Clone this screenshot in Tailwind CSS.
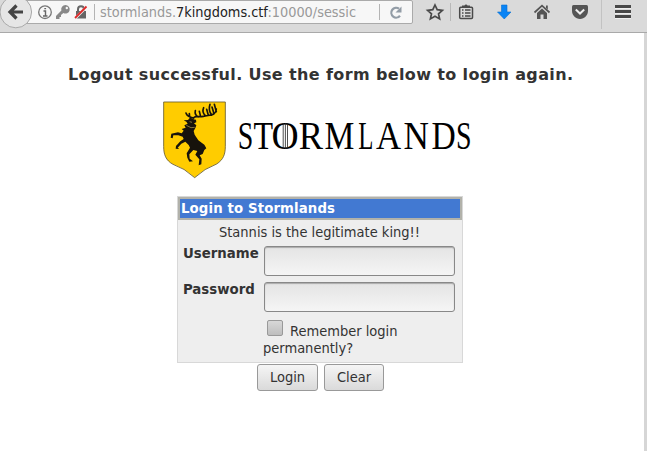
<!DOCTYPE html>
<html lang="en">
<head>
    <meta charset="UTF-8">
    <meta name="viewport" content="width=device-width, initial-scale=1.0">
    <title>Login to Stormlands</title>
    <script src="https://cdn.jsdelivr.net/npm/@tailwindcss/browser@4"></script>
</head>
<body class="h-screen overflow-hidden bg-white font-['DejaVu_Sans_Condensed','DejaVu_Sans',sans-serif] text-[#333]">
<div class="flex h-full flex-col">
    <!-- Browser toolbar -->
    <header class="h-[33px] shrink-0 overflow-hidden border-b border-[#a9a9a9] bg-[#dadada]">
        <svg class="block" width="647" height="32" viewBox="0 0 647 32">
            <rect x="20" y=".5" width="392.500" height="23" rx="1.500" fill="#f7f7f7" stroke="#aaa"/>
            <circle cx="15.800" cy="12" r="15.800" fill="#e6e6e6" stroke="#aaa"/>
            <path d="M23 12H11M16.500 5.500 10 12l6.500 6.500" fill="none" stroke="#444" stroke-width="3.200"/>
            <circle cx="45" cy="12.200" r="6.300" fill="none" stroke="#777" stroke-width="1.300"/>
            <path d="M43.500 11H45.500v5M43 16h4.500M44.300 8.600h1.800" fill="none" stroke="#666" stroke-width="1.400"/>
            <path d="M65.500 5a4.300 4.300 0 0 0-4.100 5.600L56 16v3h3.500v-2H61v-2l2.400-1.900A4.300 4.300 0 1 0 65.500 5zm1.300 1.800a1.200 1.200 0 1 1 0 2.400 1.200 1.200 0 0 1 0-2.400z" fill="#888"/>
            <path d="M76 11h10v7.500H76z" fill="#666"/>
            <path d="M78 11V9.200a3 3 0 0 1 6 0V11" fill="none" stroke="#666" stroke-width="2"/>
            <path d="M75.500 18 87 6.500" stroke="#f7f7f7" stroke-width="2.500"/>
            <path d="M75 18 86.500 6.500" stroke="#dc2828" stroke-width="1.800"/>
            <path d="M94.500 4v16M379.500 4v16" stroke="#b4b4b4"/>
            <text x="100" y="17" font-size="14.500" textLength="256" lengthAdjust="spacingAndGlyphs" fill="#999">stormlands.<tspan fill="#222">7kingdoms.ctf</tspan>:10000/sessic</text>
            <path d="M400 15.800A4.900 4.900 0 1 1 399 8.600" fill="none" stroke="#929ca6" stroke-width="2.200"/>
            <path d="M401.500 6.500v6h-6z" fill="#929ca6"/>
            <path d="m435 5 2.200 4.700 5.200.6-3.900 3.500 1.100 5.100-4.600-2.600-4.600 2.600 1.100-5.100-3.900-3.500 5.200-.6z" fill="none" stroke="#4a4a4a" stroke-width="1.700"/>
            <path d="M450.500 3v18" stroke="#b8b8b8"/>
            <rect x="459.700" y="7.200" width="12.800" height="11.300" rx="1" fill="none" stroke="#4a4a4a" stroke-width="1.500"/>
            <path d="M462 7V5.500h2.500a1.600 1.600 0 0 1 3 0H470V7z" fill="#4a4a4a"/>
            <path d="M462 10h1.500m1.500 0h5.500m-8.500 3h1.500m1.500 0h5.500m-8.500 3h1.500m1.500 0h5.500" stroke="#4a4a4a" stroke-width="1.400"/>
            <path d="M501.500 5h5.500v7h4l-6.750 7-6.750-7h4z" fill="#0a84f5" stroke="#0870d0" stroke-width=".6"/>
            <path d="M534.500 12.500 542 5.700l7.500 6.800" fill="none" stroke="#555" stroke-width="1.700"/>
            <path d="M537 13l5-4.500 5 4.500v6h-3.500v-4.500h-3V19H537zM546 5.500h1.800v4L546 8z" fill="#555"/>
            <path d="M573.500 5h13q1.500 0 1.500 1.500V11c0 4-3.500 8-8 8s-8-4-8-8V6.500q0-1.500 1.500-1.500z" fill="#555"/>
            <path d="m575.800 9.500 4.200 4 4.200-4" fill="none" stroke="#eee" stroke-width="2"/>
            <path d="M601.500 0v29" stroke="#c2c2c2"/>
            <path d="M615 6.500h16M615 11.500h16M615 16.500h16" stroke="#484848" stroke-width="3"/>
            <path d="M615 8.500h16M615 13.500h16M615 18.500h16" stroke="#eee"/>
        </svg>
    </header>

    <main class="flex flex-1 flex-col items-center border-r-[3px] border-[#d6d6d6] pr-1">
        <h1 class="mt-[31px] h-5 w-[505px] whitespace-nowrap">
            <svg class="block overflow-visible" width="505" height="20"><text x="0" y="16" font-family="DejaVu Sans" font-weight="bold" font-size="16" textLength="505" fill="#333">Logout successful. Use the form below to login again.</text></svg>
        </h1>

        <!-- Shield and name -->
        <svg class="mt-[11px] mr-[10px] block shrink-0" width="320" height="90" viewBox="155 95 320 90">
            <g transform="translate(155 95) scale(.33333)">
                <path d="M26 21H211V154C211 178 205 194 185 207Q149 220 119 248Q88 219 54 208C32 196 26 178 26 154Z" fill="#fc0" stroke="#665c30" stroke-width="2.500"/>
                <path d="M86 76 99 75 106 67 114 73 123 74 124 82 117 85 124 91 121 99 116 108 119 119 130 136 148 149 154 160 148 165 143 177 134 181 140 191 139 208 131 211 133 193 121 179 127 168 115 165 103 178 104 191 114 199 103 200 97 188 95 175 105 158 101 150 91 140 79 146 68 158 73 162 62 161 63 153 76 139 86 132 83 125 70 121 55 121 53 130 47 128 49 116 69 112 80 115 86 107 80 102 92 98 88 91 98 86 94 80Z" fill="#17130c"/>
                <path d="M112 76C117 58 127 68 145 64C166 59 183 63 184 42M116 69Q96 65 93 54M104 66 103 56M130 66Q118 60 121 47M137 65 133 49M151 62Q140 52 146 38M160 61 155 43M170 60Q159 46 165 28M177 56 171 36M184 50 178 28" fill="none" stroke="#17130c" stroke-width="5" stroke-linecap="round"/>
                <path d="M94 91 108 98 119 97M104 80 111 82" fill="none" stroke="#bba65a" stroke-width="2"/>
            </g>
            <g font-family="Liberation Serif" font-size="40" fill="#000">
                <text transform="translate(237.800 149) scale(.7 1)">S</text>
                <text transform="translate(253.400 149) scale(.8 1)">T</text>
                <text transform="translate(271.500 149) scale(.94 1)">O</text>
                <text transform="translate(298.700 149) scale(.91 1)">R</text>
                <text transform="translate(324.600 149) scale(.84 1)">M</text>
                <text transform="translate(358.200 149) scale(.62 1)">L</text>
                <text transform="translate(376 149) scale(.87 1)">A</text>
                <text transform="translate(403.600 149) scale(.88 1)">N</text>
                <text transform="translate(431.500 149) scale(.84 1)">D</text>
                <text transform="translate(455.900 149) scale(.7 1)">S</text>
            </g>
            <path d="M283.200 123v26M285.400 123v26M287.500 123v26" stroke="#222" stroke-width=".8"/>
        </svg>

        <form class="mt-[11px] flex flex-col items-center">
            <div class="h-[167px] w-[286px] border border-[#d8d8d8] bg-[#eee]">
                <div class="flex h-[23px] items-center border-2 border-[#b2b2aa] bg-[#4279d2] pl-px">
                    <svg class="block overflow-visible" width="154" height="18"><text x="0" y="13" font-family="DejaVu Sans" font-weight="bold" font-size="13.300" textLength="154" fill="#fff">Login to Stormlands</text></svg>
                </div>
                <p class="h-[26px] pt-[3px] pr-px text-center text-[14.5px] leading-[18px]">Stannis is the legitimate king!!</p>
                <div class="flex h-9 pl-[5px]">
                    <label for="user" class="-mt-px w-[81px] text-[14.8px] leading-[16px] font-bold">Username</label>
                    <input id="user" type="text" class="h-[30px] w-[191px] rounded-[3px] border border-[#888] bg-linear-to-b from-[#e4e4e4] to-[#f5f5f5] px-1 shadow-[inset_0_1px_1px_#aaa]">
                </div>
                <div class="flex h-9 pl-[5px]">
                    <label for="pass" class="-mt-px w-[81px] text-[14.8px] leading-[16px] font-bold">Password</label>
                    <input id="pass" type="password" class="h-[30px] w-[191px] rounded-[3px] border border-[#888] bg-linear-to-b from-[#e4e4e4] to-[#f5f5f5] px-1 shadow-[inset_0_1px_1px_#aaa]">
                </div>
                <label class="mt-[2px] block pl-[85px] text-[14.5px] leading-[17px]">
                    <span class="flex h-[17px] items-start">
                        <input type="checkbox" class="mr-[7px] ml-1 size-4 shrink-0 appearance-none rounded-[2px] border border-[#999] bg-linear-to-b from-[#d8d8d8] to-[#bebebe]">
                        <span class="pt-[3px]">Remember login</span>
                    </span>
                    <span class="block pt-[3px]">permanently?</span>
                </label>
            </div>
            <div class="mt-px ml-px flex gap-1.5 text-[14.5px]">
                <button type="submit" class="h-[27px] w-[61px] rounded-[3px] border border-[#999] bg-linear-to-b from-[#f5f5f5] to-[#dadada] leading-none">Login</button>
                <button type="reset" class="h-[27px] w-[60px] rounded-[3px] border border-[#999] bg-linear-to-b from-[#f5f5f5] to-[#dadada] leading-none">Clear</button>
            </div>
        </form>
    </main>
</div>
</body>
</html>
